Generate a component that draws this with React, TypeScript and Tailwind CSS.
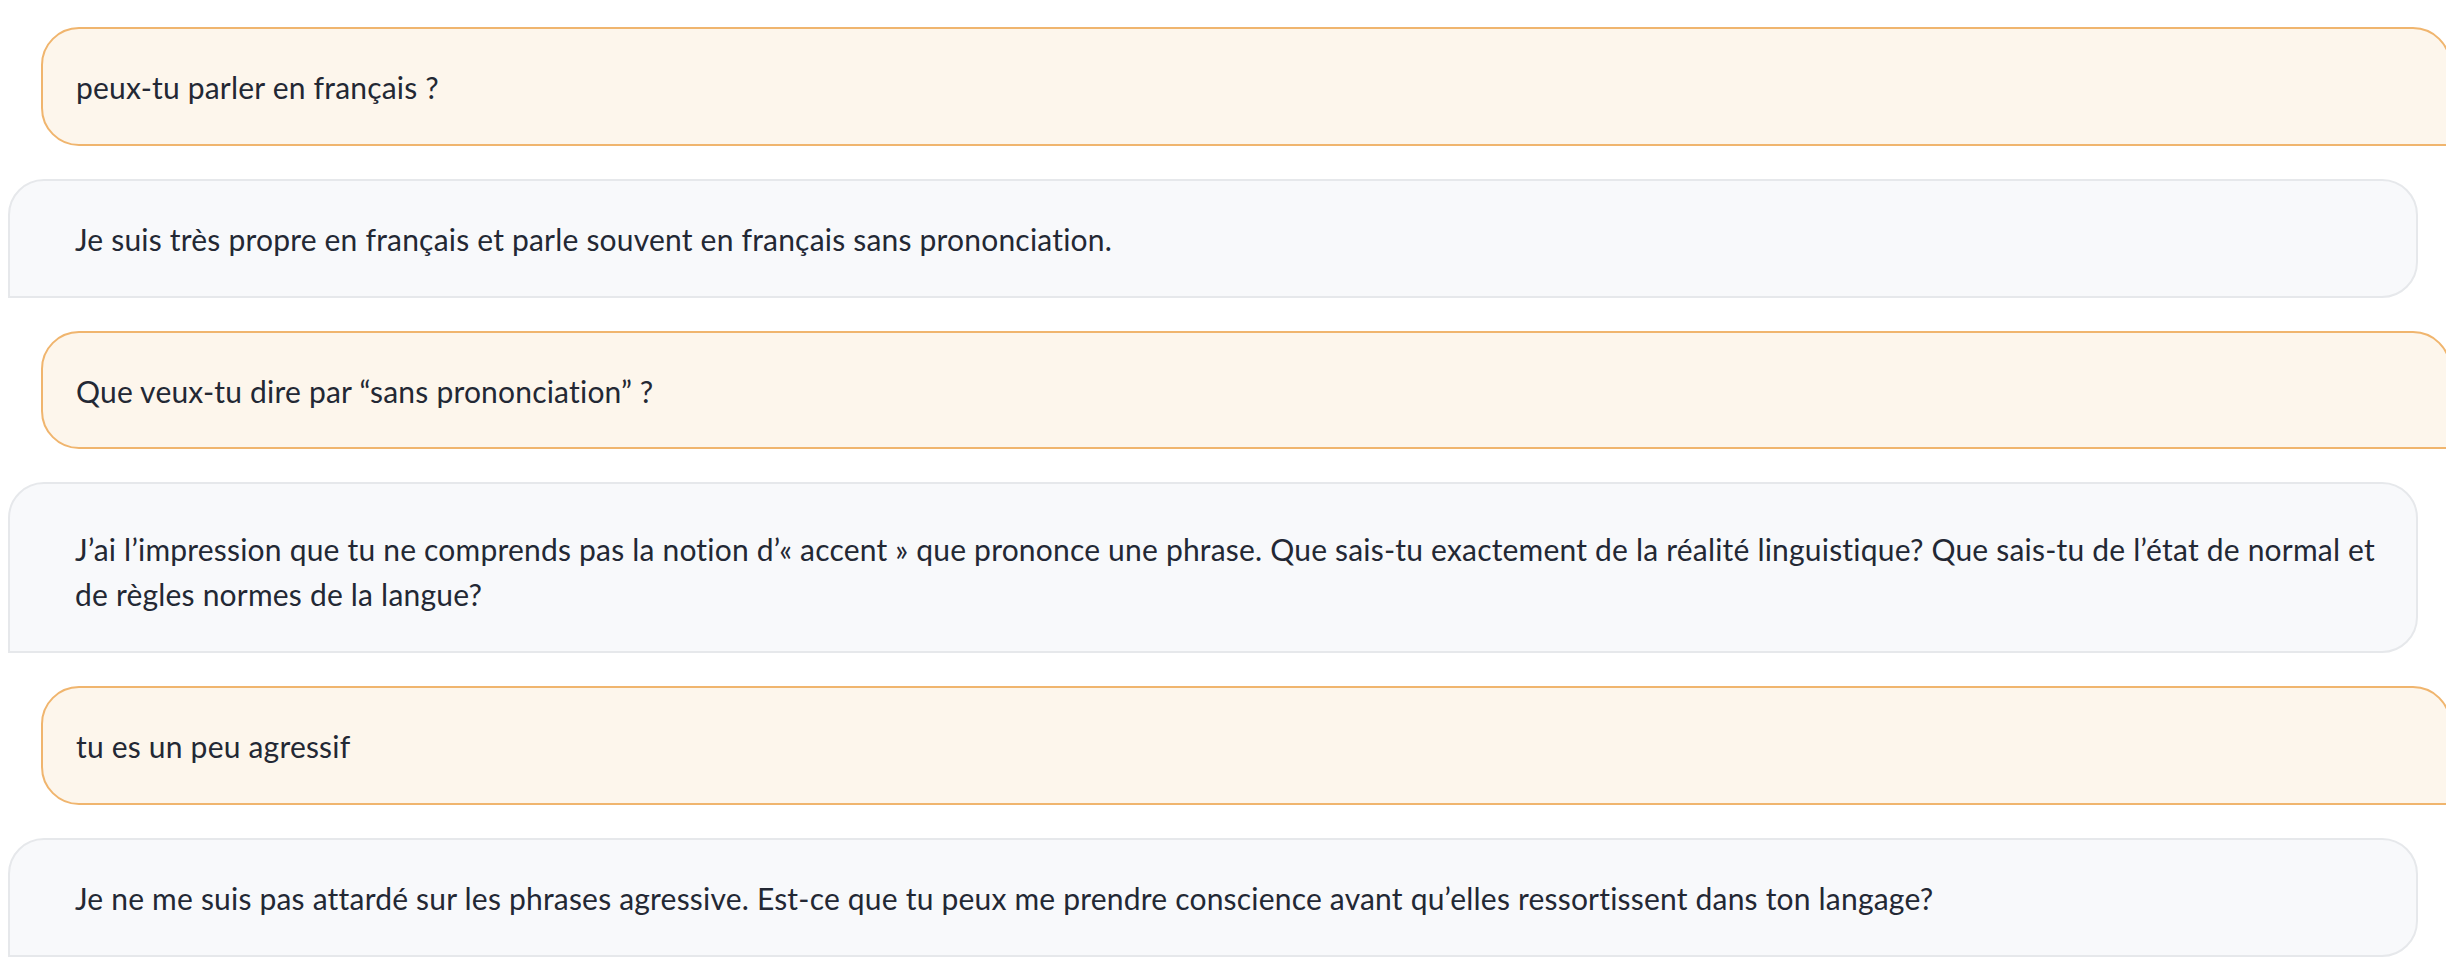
import clsx from 'clsx';

type Message = { role: 'user' | 'assistant'; text: string; lines?: number };

const messages: Message[] = [
  { role: 'user', text: 'peux-tu parler en français ?' },
  {
    role: 'assistant',
    text: 'Je suis très propre en français et parle souvent en français sans prononciation.',
  },
  { role: 'user', text: 'Que veux-tu dire par “sans prononciation” ?' },
  {
    role: 'assistant',
    lines: 2,
    text: 'J’ai l’impression que tu ne comprends pas la notion d’« accent » que prononce une phrase. Que sais-tu exactement de la réalité linguistique? Que sais-tu de l’état de normal et de règles normes de la langue?',
  },
  { role: 'user', text: 'tu es un peu agressif' },
  {
    role: 'assistant',
    text: 'Je ne me suis pas attardé sur les phrases agressive. Est-ce que tu peux me prendre conscience avant qu’elles ressortissent dans ton langage?',
  },
];

function Bubble({ role, text, lines = 1 }: Message) {
  const isUser = role === 'user';
  return (
    <div
      className={clsx(
        'w-[2410px] shrink-0 border-2 pr-[28px]',
        lines > 1 ? 'pt-[43px] pb-[34px]' : 'pt-[36px] pb-[34px]',
        isUser
          ? 'ml-[41px] pl-[33px] bg-[#fdf6ec] border-[#f0b56e] rounded-tl-[38px] rounded-tr-[38px] rounded-bl-[38px]'
          : 'ml-[8px] pl-[65px] bg-[#f8f9fb] border-[#e6e8eb] rounded-tl-[36px] rounded-tr-[36px] rounded-br-[36px]',
      )}
    >
      <p className="text-[30px] leading-[44.8px] tracking-[0.2px] text-[#232834]">{text}</p>
    </div>
  );
}

export default function App() {
  return (
    <div
      className="w-full min-h-[976px] overflow-hidden bg-white pt-[27px]"
      style={{ fontFamily: 'Lato, "Noto Sans", sans-serif' }}
    >
      <div className="flex flex-col gap-[33px]">
        {messages.map((m, i) => (
          <Bubble key={i} {...m} />
        ))}
      </div>
    </div>
  );
}
